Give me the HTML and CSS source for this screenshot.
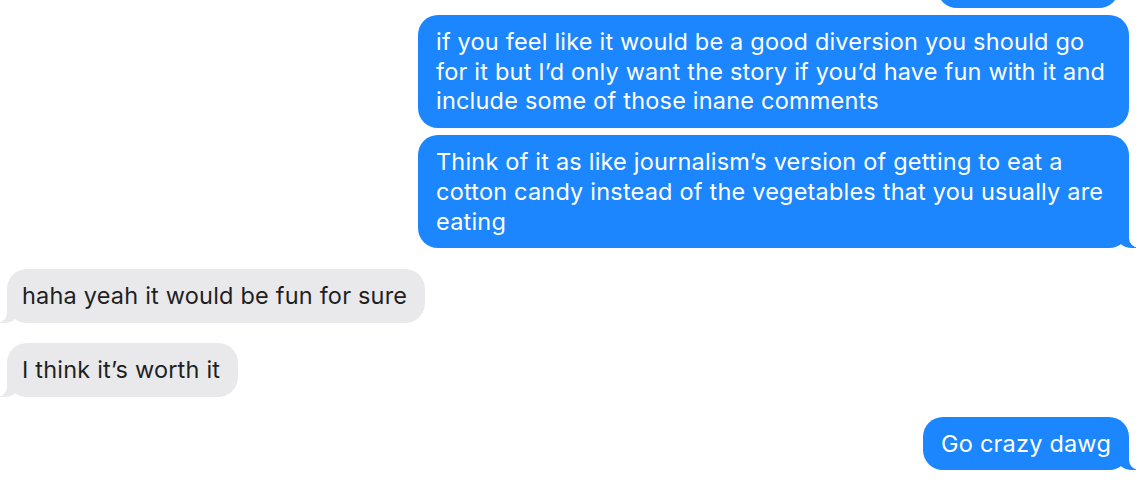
FILE: index.html
```html
<!DOCTYPE html>
<html lang="en">
<head>
  <meta charset="UTF-8">
  <meta name="viewport" content="width=device-width, initial-scale=1.0">
  <title>Messages</title>
  <link rel="stylesheet" href="styles.css">
</head>
<body>
  <div class="chat">
    <div class="bubble out stub"></div>

    <div class="bubble out same">if you feel like it would be a good diversion you should go for it but I’d only want the story if you’d have fun with it and include some of those inane comments</div>
    <div class="bubble out same tail">Think of it as like journalism’s version of getting to eat a cotton candy instead of the vegetables that you usually are eating</div>

    <div class="bubble in tail">haha yeah it would be fun for sure</div>
    <div class="bubble in tail">I think it’s worth it</div>

    <div class="bubble out tail">Go crazy dawg</div>
  </div>
</body>
</html>
```

FILE: styles.css
```css
:root {
  --blue: #1b86fd;
  --gray: #e9e9eb;
  --page: #ffffff;
}

body {
  margin: 0;
  background: var(--page);
  font-family: Inter, "Noto Sans", sans-serif;
  overflow: hidden;
}

.chat {
  display: flex;
  flex-direction: column;
  padding: 0 13px 0 7px;
}

.bubble {
  position: relative;
  max-width: 675px;
  padding: 12px 18px;
  border-radius: 20px;
  font-size: 23.5px;
  letter-spacing: 0.2px;
  line-height: 29.7px;
  margin-top: 20px;
}

.out {
  align-self: flex-end;
  background: var(--blue);
  color: #fff;
}

.in {
  align-self: flex-start;
  background: var(--gray);
  color: #1f1f1f;
  padding: 12px 18px 12px 15px;
}

.same {
  margin-top: 7px;
}

.stub {
  margin-top: -46px;
  width: 146px;
  height: 30px;
  margin-right: 10px;
}

.stub + .same {
  margin-top: 7px;
}

/* little tails on the last bubble of a run */
.tail::before,
.tail::after {
  content: "";
  position: absolute;
  bottom: 0;
  height: 20px;
}

.out.tail::before {
  right: -7px;
  width: 20px;
  background: var(--blue);
  border-bottom-left-radius: 16px 14px;
}

.out.tail::after {
  right: -26px;
  width: 26px;
  background: var(--page);
  border-bottom-left-radius: 10px;
}

.in.tail::before {
  left: -7px;
  width: 20px;
  background: var(--gray);
  border-bottom-right-radius: 16px 14px;
}

.in.tail::after {
  left: -26px;
  width: 26px;
  background: var(--page);
  border-bottom-right-radius: 10px;
}

.out.tail + .in {
  margin-top: 21px;
}
```
